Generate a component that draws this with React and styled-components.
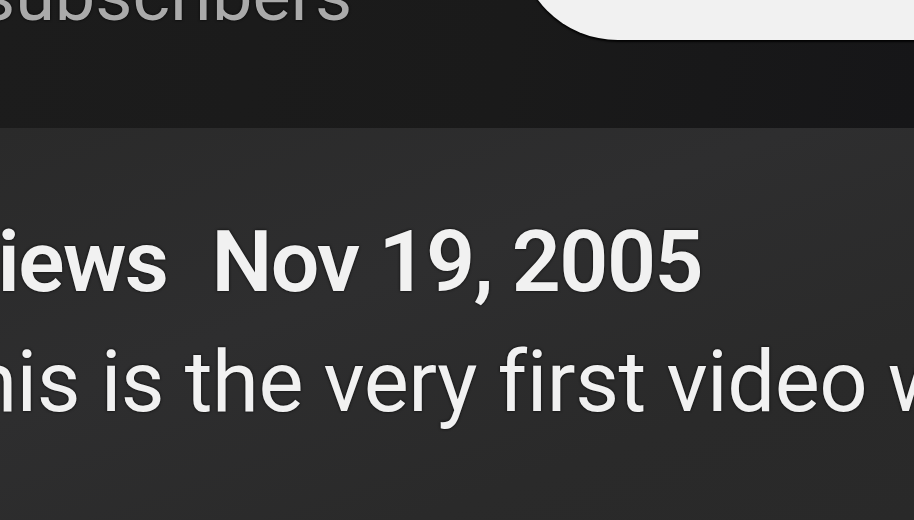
import React from 'react';
import styled, { createGlobalStyle } from 'styled-components';

const GlobalStyle = createGlobalStyle`
  html, body {
    margin: 0;
    padding: 0;
    background: #1a1a1a;
    overflow: hidden;
  }
  #root {
    width: 914px;
    height: 520px;
    overflow: hidden;
  }
`;

const Page = styled.main`
  width: 914px;
  height: 520px;
  overflow: hidden;
  display: flex;
  flex-direction: column;
  font-family: Roboto, 'Noto Sans', Arial, sans-serif;
`;

const OwnerBar = styled.section`
  height: 128px;
  flex-shrink: 0;
  display: flex;
  align-items: flex-start;
  background: linear-gradient(100deg, #1c1c1c 0%, #1a1a1a 55%, #161618 100%);
`;

const OwnerMeta = styled.div`
  flex-shrink: 0;
  margin-top: -52px;
  margin-left: -22px;
`;

const SubCount = styled.div`
  font-size: 72px;
  line-height: 96px;
  color: #aaaaaa;
  white-space: nowrap;
  text-shadow: 0 0 3px rgba(0, 0, 0, 0.9);
`;

const SubscribeButton = styled.button`
  flex-shrink: 0;
  margin-left: auto;
  margin-right: -200px;
  margin-top: -160px;
  width: 596px;
  height: 200px;
  border: none;
  border-radius: 100px;
  background: #f1f1f1;
  color: #0f0f0f;
  font: inherit;
  font-size: 87px;
  font-weight: 500;
  box-shadow: 0 2px 2px rgba(0, 0, 0, 0.85);
`;

const Description = styled.section`
  flex: 1;
  padding-top: 74px;
  background: linear-gradient(160deg, #2a2a2a 0%, #2e2e2f 40%, #2a2a2a 75%, #292929 100%);
  color: #f1f1f1;
  text-shadow: 0 0 3px rgba(0, 0, 0, 0.9);
`;

const InfoLine = styled.div`
  display: flex;
  white-space: nowrap;
  font-size: 86px;
  line-height: 120px;
  font-weight: 600;
  letter-spacing: -1.6px;
  margin-left: ${(p) => p.$shift}px;
`;

const InfoItem = styled.span`
  margin-right: 44px;
`;

const Snippet = styled.p`
  margin: 0;
  white-space: nowrap;
  font-size: 85px;
  line-height: 120px;
  font-weight: 400;
  letter-spacing: -0.5px;
  margin-left: ${(p) => p.$shift}px;
`;

export default function App() {
  return (
    <Page>
      <GlobalStyle />
      <OwnerBar>
        <OwnerMeta>
          <SubCount>subscribers</SubCount>
        </OwnerMeta>
        <SubscribeButton>Subscribe</SubscribeButton>
      </OwnerBar>
      <Description>
        <InfoLine $shift={-280}>
          <InfoItem>352M views</InfoItem>
          <InfoItem>Nov 19, 2005</InfoItem>
        </InfoLine>
        <Snippet $shift={-80}>This is the very first video we uploaded to YouTube.</Snippet>
      </Description>
    </Page>
  );
}
